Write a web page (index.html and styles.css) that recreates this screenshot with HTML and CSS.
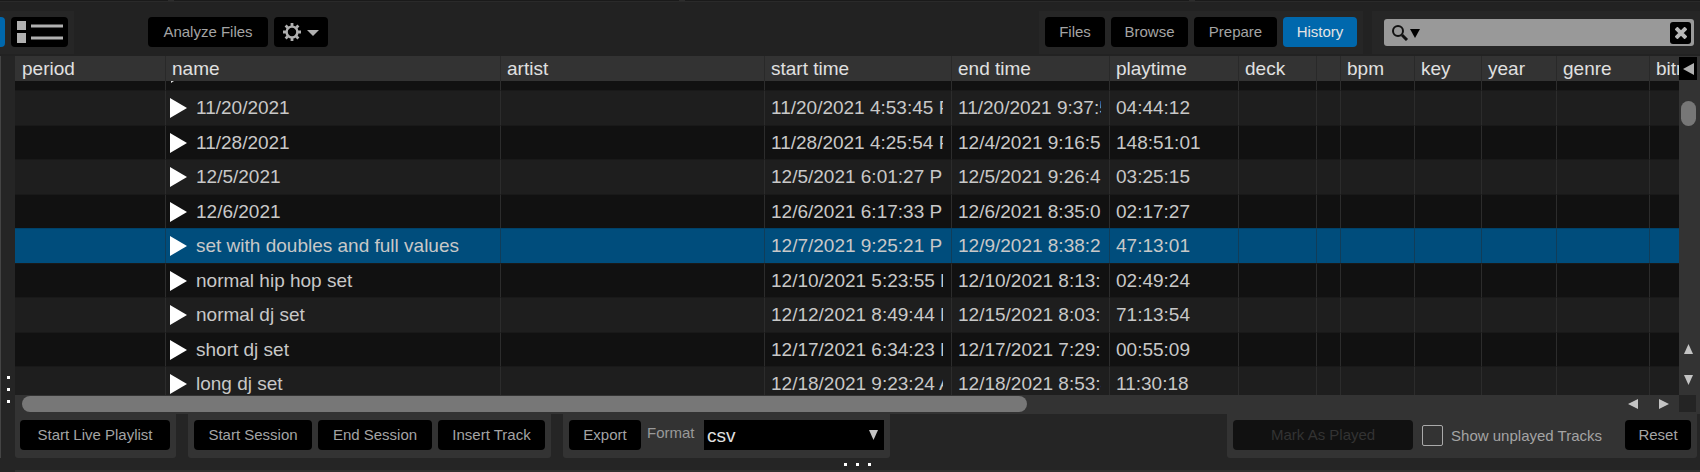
FILE: index.html
```html
<!DOCTYPE html>
<html lang="en">
<head>
<meta charset="utf-8">
<title>History</title>
<link rel="stylesheet" href="styles.css">
</head>
<body>
<div class="app">
  <div class="top-edge"><span></span><span></span><span></span><span></span></div>
  <header class="toolbar">
    <div class="view-group">
      <button class="view-active" type="button" aria-label="Album view"></button>
      <button class="btn view-list" type="button" aria-label="List view">
        <svg width="46" height="22" viewBox="0 0 46 22"><path d="M0 0h9v9H0zM0 12h9v10H0z" fill="#b0b0b0"/><path d="M14 5h32M14 17h32" stroke="#b0b0b0" stroke-width="3"/></svg>
      </button>
    </div>
    <div class="tools">
      <button class="btn analyze" type="button">Analyze Files</button>
      <button class="btn gear" type="button" aria-label="Settings">
        <svg width="36" height="18" viewBox="0 0 36 18"><circle cx="9" cy="9" r="5.400" fill="none" stroke="#b0b0b0" stroke-width="2.400"/><path d="M9 0v3M9 15v3M0 9h3M15 9h3M2.600 2.600l2.200 2.200M13.200 13.200l2.200 2.200M15.400 2.600l-2.200 2.200M4.800 13.200l-2.200 2.200" stroke="#b0b0b0" stroke-width="2.800"/><path d="M24 7h12l-6 6z" fill="#b0b0b0"/></svg>
      </button>
    </div>
    <nav class="panel-tabs">
      <button class="btn tab-files" type="button">Files</button>
      <button class="btn tab-browse" type="button">Browse</button>
      <button class="btn tab-prepare" type="button">Prepare</button>
      <button class="btn tab-history selected" type="button">History</button>
    </nav>
    <div class="search-group">
      <div class="search">
        <svg width="28" height="16" viewBox="0 0 28 16"><circle cx="6" cy="6" r="5" fill="none" stroke="#111" stroke-width="2"/><path d="M10 10l5 5" stroke="#111" stroke-width="3"/><path d="M18 4h10l-5 9z" fill="#000"/></svg>
        <input type="text" aria-label="Search">
        <button class="clear" type="button" aria-label="Clear search"><svg width="12" height="12" viewBox="0 0 12 12"><path d="M1 1l10 10M11 1L1 11" stroke="#b8b8b8" stroke-width="4"/></svg></button>
      </div>
    </div>
  </header>
  <main class="body">
    <div class="splitter"><i></i><i></i><i></i></div>
    <section class="library">
      <div class="grid">
        <div class="viewport">
          <table>
            <colgroup><col class="c-period"><col class="c-name"><col class="c-artist"><col class="c-start"><col class="c-end"><col class="c-play"><col class="c-deck"><col class="c-blank"><col class="c-bpm"><col class="c-key"><col class="c-year"><col class="c-genre"><col></colgroup>
            <thead><tr><th>period</th><th>name</th><th>artist</th><th>start time</th><th>end time</th><th>playtime</th><th>deck</th><th></th><th>bpm</th><th>key</th><th>year</th><th>genre</th><th>bitrate</th></tr></thead>
            <tbody>
              <tr class="cut"><td></td><td><svg class="tip" width="3" height="2" viewBox="0 0 3 2"><path d="M0 0h3L0 2z" fill="#ddd"/></svg></td><td></td><td></td><td></td><td></td><td></td><td></td><td></td><td></td><td></td><td></td><td></td></tr>
              <tr><td></td><td><span class="name"><svg width="17" height="20" viewBox="0 0 17 20"><path d="M0 0l17 10L0 20z" fill="#fff"/></svg>11/20/2021</span></td><td></td><td><div>11/20/2021 4:53:45 PM</div></td><td><div>11/20/2021 9:37:57 PM</div></td><td>04:44:12</td><td></td><td></td><td></td><td></td><td></td><td></td><td></td></tr>
              <tr><td></td><td><span class="name"><svg width="17" height="20" viewBox="0 0 17 20"><path d="M0 0l17 10L0 20z" fill="#fff"/></svg>11/28/2021</span></td><td></td><td><div>11/28/2021 4:25:54 PM</div></td><td><div>12/4/2021 9:16:55 PM</div></td><td>148:51:01</td><td></td><td></td><td></td><td></td><td></td><td></td><td></td></tr>
              <tr><td></td><td><span class="name"><svg width="17" height="20" viewBox="0 0 17 20"><path d="M0 0l17 10L0 20z" fill="#fff"/></svg>12/5/2021</span></td><td></td><td><div>12/5/2021 6:01:27 PM</div></td><td><div>12/5/2021 9:26:42 PM</div></td><td>03:25:15</td><td></td><td></td><td></td><td></td><td></td><td></td><td></td></tr>
              <tr><td></td><td><span class="name"><svg width="17" height="20" viewBox="0 0 17 20"><path d="M0 0l17 10L0 20z" fill="#fff"/></svg>12/6/2021</span></td><td></td><td><div>12/6/2021 6:17:33 PM</div></td><td><div>12/6/2021 8:35:00 PM</div></td><td>02:17:27</td><td></td><td></td><td></td><td></td><td></td><td></td><td></td></tr>
              <tr class="current"><td></td><td><span class="name"><svg width="17" height="20" viewBox="0 0 17 20"><path d="M0 0l17 10L0 20z" fill="#fff"/></svg>set with doubles and full values</span></td><td></td><td><div>12/7/2021 9:25:21 PM</div></td><td><div>12/9/2021 8:38:22 PM</div></td><td>47:13:01</td><td></td><td></td><td></td><td></td><td></td><td></td><td></td></tr>
              <tr><td></td><td><span class="name"><svg width="17" height="20" viewBox="0 0 17 20"><path d="M0 0l17 10L0 20z" fill="#fff"/></svg>normal hip hop set</span></td><td></td><td><div>12/10/2021 5:23:55 PM</div></td><td><div>12/10/2021 8:13:19 PM</div></td><td>02:49:24</td><td></td><td></td><td></td><td></td><td></td><td></td><td></td></tr>
              <tr><td></td><td><span class="name"><svg width="17" height="20" viewBox="0 0 17 20"><path d="M0 0l17 10L0 20z" fill="#fff"/></svg>normal dj set</span></td><td></td><td><div>12/12/2021 8:49:44 PM</div></td><td><div>12/15/2021 8:03:38 PM</div></td><td>71:13:54</td><td></td><td></td><td></td><td></td><td></td><td></td><td></td></tr>
              <tr><td></td><td><span class="name"><svg width="17" height="20" viewBox="0 0 17 20"><path d="M0 0l17 10L0 20z" fill="#fff"/></svg>short dj set</span></td><td></td><td><div>12/17/2021 6:34:23 PM</div></td><td><div>12/17/2021 7:29:32 PM</div></td><td>00:55:09</td><td></td><td></td><td></td><td></td><td></td><td></td><td></td></tr>
              <tr><td></td><td><span class="name"><svg width="17" height="20" viewBox="0 0 17 20"><path d="M0 0l17 10L0 20z" fill="#fff"/></svg>long dj set</span></td><td></td><td><div>12/18/2021 9:23:24 AM</div></td><td><div>12/18/2021 8:53:42 PM</div></td><td>11:30:18</td><td></td><td></td><td></td><td></td><td></td><td></td><td></td></tr>
            </tbody>
          </table>
        </div>
        <div class="vbar">
          <button class="collapse" type="button" aria-label="Column menu"><svg width="11" height="12" viewBox="0 0 11 12"><path d="M11 0v12L0 6z" fill="#b0b0b0"/></svg></button>
          <div class="vthumb"></div>
          <div class="varrows">
            <svg width="9" height="10" viewBox="0 0 9 10"><path d="M4.500 0L9 10H0z" fill="#c4c4c4"/></svg>
            <svg width="9" height="10" viewBox="0 0 9 10"><path d="M0 0h9L4.500 10z" fill="#c4c4c4"/></svg>
          </div>
        </div>
        <div class="hbar">
          <div class="hthumb"></div>
          <div class="harrows">
            <svg width="10" height="10" viewBox="0 0 10 10"><path d="M10 0v10L0 5z" fill="#c4c4c4"/></svg>
            <svg width="10" height="10" viewBox="0 0 10 10"><path d="M0 0l10 5L0 10z" fill="#c4c4c4"/></svg>
          </div>
        </div>
        <div class="corner"></div>
      </div>
      <footer class="actions">
        <div class="group first"><button class="btn b-live" type="button">Start Live Playlist</button></div>
        <div class="group"><button class="btn b-start" type="button">Start Session</button><button class="btn b-end" type="button">End Session</button><button class="btn b-insert" type="button">Insert Track</button></div>
        <div class="group"><button class="btn b-export" type="button">Export</button><label class="format" for="format">Format</label><span class="select"><select id="format"><option>csv</option></select><svg width="9" height="10" viewBox="0 0 9 10"><path d="M0 0h9L4.500 10z" fill="#c4c4c4"/></svg></span></div>
        <div class="group right"><button class="btn b-mark" type="button" disabled>Mark As Played</button><label class="check"><input type="checkbox">Show unplayed Tracks</label><button class="btn b-reset" type="button">Reset</button></div>
      </footer>
    </section>
  </main>
  <div class="bottom"><i></i><i></i><i></i></div>
  <div class="bottom-edge"></div>
</div>
</body>
</html>
```
FILE: styles.css
```css
* { box-sizing: border-box; }
body { margin: 0; background: #252525; color: #c8c8c8; font-family: "Liberation Sans", Arial, sans-serif; font-size: 15px; overflow: hidden; }
svg { display: block; flex: none; }
button, input, select { font: inherit; color: inherit; margin: 0; border: 0; padding: 0; }
.app { display: flex; flex-direction: column; height: 100vh; }
.top-edge { display: flex; gap: 6px; height: 1px; background: #2c2c2c; }
.top-edge span { background: #1a1a1a; flex: 3; }
.top-edge span:first-child { flex: 1; }
.toolbar { display: flex; height: 55px; padding: 9px 0 2px; background: #222; border-top: 1px solid #2a2a2a; }
.view-group { display: flex; gap: 6px; width: 74px; padding: 6px 0; background: #262626; }
.view-active { width: 5px; height: 30px; background: #0068ad; border-radius: 0 4px 4px 0; }
.btn { display: flex; align-items: center; justify-content: center; height: 30px; padding-bottom: 1px; background: #000; border-radius: 4px; color: #a4a4a4; white-space: nowrap; }
.view-list { width: 57px; }
.tools { display: flex; flex: 1; gap: 6px; padding: 6px 0 0 74px; }
.analyze { width: 120px; }
.gear { width: 54px; }
.panel-tabs { display: flex; gap: 6px; padding: 6px; background: #262626; }
.tab-files { width: 60px; }
.tab-browse { width: 77px; }
.tab-prepare { width: 83px; }
.tab-history { width: 74px; }
.selected { background: #0068ad; color: #e4e4e4; }
.search-group { width: 328px; margin-left: 9px; padding: 8px 6px 0 12px; background: #262626; }
.search { display: flex; align-items: center; height: 27px; padding: 0 3px 0 8px; background: #999; border-radius: 3px; }
.search input { flex: 1; min-width: 0; height: 24px; background: transparent; color: #111; outline: 0; }
.clear { display: flex; align-items: center; justify-content: center; width: 21px; height: 22px; background: #000; border-radius: 3px; }
.body { display: flex; flex: 1; min-height: 0; }
.splitter { display: flex; flex-direction: column; justify-content: flex-end; align-items: center; gap: 9px; width: 15px; padding-bottom: 55px; background: #252525; border-left: 1px solid #444; }
.splitter i, .bottom i { width: 3px; height: 3px; background: #fff; }
.library { display: flex; flex-direction: column; flex: 1; min-width: 0; }
.grid { display: grid; flex: 1; min-height: 0; grid-template-columns: 1fr 21px; grid-template-rows: 1fr 19px; background: #333; }
.viewport { overflow: hidden; min-height: 0; min-width: 0; }
table { width: 100%; table-layout: fixed; border-collapse: separate; border-spacing: 0; font-size: 19px; line-height: 24px; }
.c-period { width: 151px; }
.c-name { width: 335px; }
.c-artist { width: 264px; }
.c-start { width: 187px; }
.c-end { width: 158px; }
.c-play { width: 129px; }
.c-deck { width: 78px; }
.c-blank { width: 24px; }
.c-bpm { width: 74px; }
.c-key { width: 67px; }
.c-year { width: 75px; }
.c-genre { width: 93px; }
th, td { padding: 0 8px 0 6px; text-align: left; font-weight: 400; white-space: nowrap; overflow: hidden; border-right: 1px solid #2c2c2c; }
th { height: 25px; background: #333; color: #e0e0e0; border-right-color: #292929; }
th:first-child { padding-left: 7px; }
td { height: 35px; background: #1e1e1e; border-top: 1px solid #191919; }
th:last-child, td:last-child { border-right: 0; padding-right: 0; }
tbody tr:nth-child(odd) td { height: 34px; background: #111; }
tbody tr.cut td { height: 9px; line-height: 0; vertical-align: top; border-top: 0; padding-left: 5px; }
td div { overflow: hidden; }
tbody tr.current td { background: #004d7c; border-top-color: #00426a; border-right-color: #113d59; }
.name { display: flex; align-items: center; gap: 9px; margin-left: -2px; }
.vbar { display: flex; flex-direction: column; align-items: center; padding: 1px 3px 0 0; background: #333; }
.collapse { display: flex; align-items: center; justify-content: center; width: 18px; height: 23px; background: #000; }
.vthumb { width: 15px; height: 25px; margin-top: 21px; border-radius: 8px; background: #777; }
.varrows { display: flex; flex-direction: column; gap: 21px; margin-top: auto; padding-bottom: 10px; }
.hbar { display: flex; align-items: flex-start; padding: 1px 10px 0 7px; }
.hthumb { width: 61%; height: 16px; border-radius: 8px; background: #777; }
.harrows { display: flex; gap: 21px; margin-left: auto; padding-top: 3px; }
.corner { width: 17px; height: 17px; background: #242424; }
.actions { display: flex; gap: 12px; height: 44px; background: #252525; }
.group { display: flex; align-items: flex-start; gap: 6px; padding: 6px; background: #333; border-radius: 0 0 3px 3px; }
.first { padding-left: 5px; }
.b-live { width: 150px; }
.b-start { width: 118px; }
.b-end { width: 114px; }
.b-insert { width: 107px; }
.b-export { width: 72px; }
.format { min-width: 51px; line-height: 26px; color: #999; }
.select { display: flex; align-items: center; width: 180px; height: 30px; padding-right: 6px; background: #000; }
.select select { flex: 1; height: 30px; padding-left: 3px; background: #000; color: #e0e0e0; appearance: none; font-size: 19px; }
.right { margin-left: auto; margin-right: 3px; }
.b-mark { width: 180px; background: #111; color: #333; }
.check { display: flex; align-items: center; gap: 8px; height: 30px; padding: 0 17px 0 3px; color: #a4a4a4; }
.check input { appearance: none; width: 21px; height: 21px; border: 1px solid #aaa; border-radius: 2px; }
.b-reset { width: 66px; }
.bottom { display: flex; justify-content: center; align-items: center; gap: 9px; height: 12px; padding-left: 14px; background: #252525; }
.bottom-edge { height: 2px; margin-left: 15px; background: #303030; }
```
